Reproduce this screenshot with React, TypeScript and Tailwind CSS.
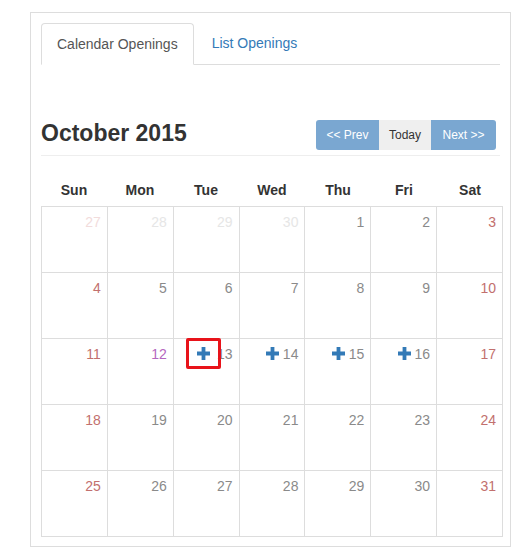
const days = ["Sun", "Mon", "Tue", "Wed", "Thu", "Fri", "Sat"];

type Cell = { n: number; other?: boolean; holiday?: boolean; plus?: boolean; marked?: boolean };

const cells: Cell[] = [
  { n: 27, other: true }, { n: 28, other: true }, { n: 29, other: true }, { n: 30, other: true },
  { n: 1 }, { n: 2 }, { n: 3 },
  { n: 4 }, { n: 5 }, { n: 6 }, { n: 7 }, { n: 8 }, { n: 9 }, { n: 10 },
  { n: 11 }, { n: 12, holiday: true }, { n: 13, plus: true, marked: true }, { n: 14, plus: true },
  { n: 15, plus: true }, { n: 16, plus: true }, { n: 17 },
  { n: 18 }, { n: 19 }, { n: 20 }, { n: 21 }, { n: 22 }, { n: 23 }, { n: 24 },
  { n: 25 }, { n: 26 }, { n: 27 }, { n: 28 }, { n: 29 }, { n: 30 }, { n: 31 },
];

function Plus() {
  return (
    <svg width="13" height="13" viewBox="0 0 13 13" className="block">
      <path d="M4.6 0h3.8v4.6H13v3.8H8.4V13H4.6V8.4H0V4.6h4.6z" fill="#337ab7" />
    </svg>
  );
}

function numColor(c: Cell, col: number) {
  const weekend = col === 0 || col === 6;
  if (c.other) return weekend ? "text-[#f2dcdc]" : "text-[#e6e6e6]";
  if (c.holiday) return "text-[#b566c0]";
  if (weekend) return "text-[#c2706e]";
  return "text-[#8a8a8a]";
}

export default function App() {
  return (
    <div className="pl-[30px] pt-[12px] font-['Liberation_Sans',Arial,sans-serif] text-[14px] text-[#333]">
      <div className="w-[481px] h-[535px] border border-[#ddd] px-[10px] pt-[10px]">
        <div className="flex h-[42px] border-b border-[#ddd]">
          <div className="h-[42px] px-[15px] leading-[41px] border border-[#ddd] border-b-white rounded-t-[4px] bg-white text-[#555]">
            Calendar Openings
          </div>
          <div className="ml-[2px] h-[42px] px-[16px] leading-[41px] text-[#337ab7]">List Openings</div>
        </div>

        <div className="mt-[55px] flex items-start justify-between pr-[4px]">
          <h2 className="text-[23px] font-bold leading-[26px] text-[#333]">October 2015</h2>
          <div className="flex h-[30px] text-[12px] leading-[30px]">
            <div className="w-[63px] text-center rounded-l-[3px] bg-[#7aa7d1] text-white">&lt;&lt; Prev</div>
            <div className="w-[52px] text-center bg-[#efefef] text-[#333]">Today</div>
            <div className="w-[65px] text-center rounded-r-[3px] bg-[#7aa7d1] text-white">Next &gt;&gt;</div>
          </div>
        </div>
        <div className="mt-[5px] border-t border-[#eee]" />

        <div className="mt-[24px] grid w-[462px] grid-cols-7 h-[20px] leading-[20px] font-bold text-[#333]">
          {days.map((d) => (
            <div key={d} className="text-center">{d}</div>
          ))}
        </div>

        <div className="mt-[6px] grid w-[462px] grid-cols-7 border-l border-t border-[#ddd]">
          {cells.map((c, i) => (
            <div
              key={i}
              className={`flex h-[66px] items-start justify-end border-r border-b border-[#ddd] pr-[6px] pt-[5px] leading-[20px] ${numColor(c, i % 7)}`}
            >
              {c.plus && c.marked && (
                <span className="relative z-10 mt-[-6px] mr-[-4px] flex h-[31px] w-[35px] items-center justify-center rounded-[2px] border-[3px] border-[#e8131a]">
                  <span className="mt-[-1px]">
                    <Plus />
                  </span>
                </span>
              )}
              {c.plus && !c.marked && (
                <span className="mr-[4px] mt-[3px]">
                  <Plus />
                </span>
              )}
              <span>{c.n}</span>
            </div>
          ))}
        </div>
      </div>
    </div>
  );
}
